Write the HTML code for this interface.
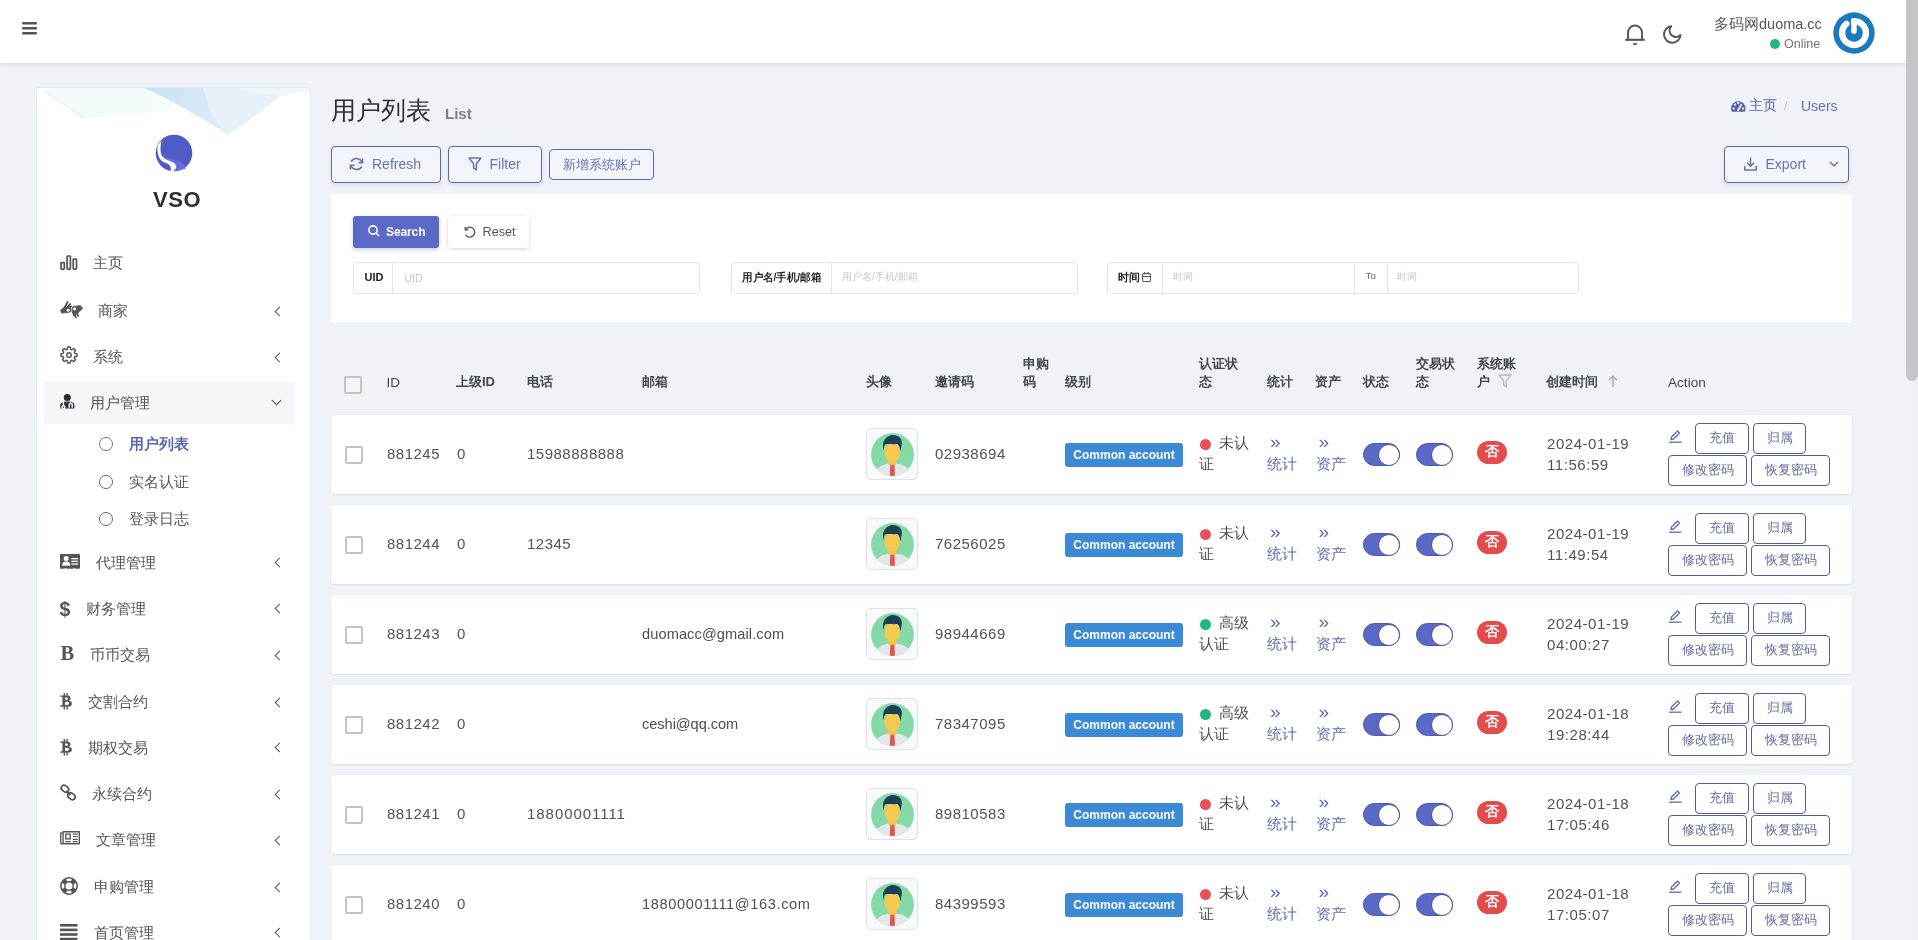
<!DOCTYPE html>
<html><head><meta charset="utf-8"><title>用户列表</title>
<style>
*{box-sizing:border-box;margin:0;padding:0}
html,body{width:1918px;height:940px;overflow:hidden}
body{background:#eff2f7;font-family:"Liberation Sans",sans-serif;color:#414750;position:relative}
.a{position:absolute}
.t{position:absolute;white-space:nowrap;line-height:1}
svg{position:absolute;overflow:visible}
#root{position:absolute;left:0;top:0;width:1918px;height:940px;will-change:transform}
#nav{left:0;top:0;width:1906px;height:63px;background:#fff;box-shadow:0 1px 5px rgba(40,50,70,.13);z-index:5}
#sb{left:1906px;top:0;width:12px;height:940px;background:#f1f1f1;z-index:9}
#sbt{left:1906px;top:0;width:12px;height:381px;background:#c6c6c6;border-radius:0 0 6px 6px;z-index:10}
#side{left:37px;top:88px;width:273px;height:870px;background:#fff;overflow:hidden;box-shadow:0 0 2px rgba(0,0,0,.1)}
.mi{color:#555;font-size:14.6px}
.chev{position:absolute;width:7px;height:7px;border-left:1.6px solid #555;border-bottom:1.6px solid #555;transform:rotate(45deg)}
.card{position:absolute;background:#fff;border-radius:4px}
.obtn{position:absolute;border:1px solid #5d68a9;border-radius:4px;background:#f3f5fa;color:#6674b6;box-shadow:0 2px 4px rgba(60,70,110,.12)}
.ig{position:absolute;height:32px;border:1px solid #e2e4e8;border-radius:4px;background:#fff}
.ig .lab{position:absolute;top:0;height:30px;border-right:1px solid #e2e4e8;font-weight:bold;color:#222;font-size:11px}
.ph{color:#c6c6c6;font-size:10.5px}
.hd{font-weight:bold;color:#414750;font-size:13px}
.row{position:absolute;left:331px;width:1521px;height:78.5px;background:#fff;border-radius:3px;box-shadow:0 1px 2px rgba(30,40,60,.09),0 0 1px rgba(30,40,60,.12)}
.cb{position:absolute;width:18px;height:18px;border:2px solid #c4c4c4;border-radius:2px;background:#fff}
.td{font-size:15px;color:#4a4f56}
.num{letter-spacing:.5px;font-size:15px;color:#505358}
.badge{position:absolute;width:118px;height:24px;background:#3a8ad6;border-radius:3px;color:#fff;font-weight:bold;font-size:12px;text-align:center;line-height:24px}
.dot{position:absolute;width:11px;height:11px;border-radius:50%}
.lk{color:#5e6cb0}
.tg{position:absolute;width:37px;height:23px;border-radius:12px;background:#5a69c6;border:1px solid #4b59a8}
.tg i{position:absolute;right:-0.5px;top:-0.5px;width:22px;height:22px;border-radius:50%;background:#fff;border:1.3px solid #4a569e}
.no{position:absolute;width:30px;height:23px;border-radius:12px;background:#e44c4c;color:#fff;font-size:13.5px;text-align:center;line-height:22px;font-weight:bold}
.abtn{position:absolute;height:31px;border:1px solid #535d9c;border-radius:4px;background:#fff;color:#646c9c;font-size:13px;text-align:center;line-height:27.5px}
.av{position:absolute;width:52px;height:52px;border:1px solid #dfe3e8;border-radius:5px;background:#f8f9fb}
</style></head><body>
<div id="root"><div id="nav" class="a">
<svg style="left:22px;top:21px" width="16" height="15"><rect x="0" y="1" width="15" height="2.6" rx="1" fill="#555"/><rect x="0" y="6" width="15" height="2.6" rx="1" fill="#555"/><rect x="0" y="11" width="15" height="2.6" rx="1" fill="#555"/></svg>
<svg style="left:1624px;top:23px" width="22" height="23" viewBox="0 0 22 23"><path d="M4 16.3 V9.5 a7 7 0 0 1 14 0 V16.3" fill="none" stroke="#555" stroke-width="1.9"/><path d="M1.3 16.8 H20.7" stroke="#555" stroke-width="2.1"/><path d="M9.2 20.3 Q11 22.4 12.8 20.3" fill="none" stroke="#555" stroke-width="1.7"/></svg>
<svg style="left:1662px;top:25px" width="21" height="20" viewBox="0 0 21 20"><path d="M9.3 1.2 A8.3 8.3 0 1 0 18.6 10 A6.2 6.2 0 0 1 9.3 1.2 Z" fill="none" stroke="#555" stroke-width="1.9" stroke-linejoin="round"/></svg>
<div class="t " style="left:1714px;top:17px;font-size:14.5px;color:#555">多码网duoma.cc</div>
<div class="dot" style="left:1770px;top:38.5px;width:10px;height:10px;background:#21b978"></div>
<div class="t " style="left:1784px;top:37.5px;font-size:12.5px;color:#777">Online</div>
<svg style="left:1833px;top:12px" width="42" height="42" viewBox="0 0 42 42"><circle cx="21" cy="21" r="20.7" fill="#1b79be"/><path d="M13.35 11.88 A11.9 11.9 0 1 0 21 9.1" fill="none" stroke="#fff" stroke-width="6.4" stroke-linecap="round"/><path d="M21 8.8 V19.2" stroke="#fff" stroke-width="5.4" stroke-linecap="round"/></svg>
</div>
<div id="side" class="a">
<svg style="left:0;top:0" width="273" height="60" viewBox="0 0 273 60">
<defs><filter id="bl" x="-5%" y="-20%" width="110%" height="140%"><feGaussianBlur stdDeviation="0.6"/></filter>
<linearGradient id="vg" x1="0" y1="0" x2="1" y2="0.3"><stop offset="0" stop-color="#c6e1f5"/><stop offset="1" stop-color="#dcecf8"/></linearGradient></defs>
<g filter="url(#bl)">
<path d="M0 0 H107 L95 5 L60 4Z" fill="#eef3f7"/>
<path d="M4 0 L48 30 L90 27 L140 21 L107 0Z" fill="#f3fbfc"/>
<path d="M8 3 L46 29.5" stroke="#ebf1f2" stroke-width="1.6"/>
<path d="M107 0 C128 9 148 20.5 162 29 C174 36 183 41 190.7 46.5 L175 27 L166.5 0Z" fill="url(#vg)"/>
<path d="M166.5 0 L175 27 L190.7 46.5 C206 38 226 22 243 8 L252 0Z" fill="#e6f1fa"/>
<path d="M200 0 H273 V3 L243 8 L215 3Z" fill="#eef5fb"/>
</g>
</svg>
<svg style="left:117.6px;top:46.4px" width="38" height="38" viewBox="0 0 38 38">
<circle cx="19" cy="19" r="18.3" fill="#4f5cc6"/>
<path d="M5.5 20 C9 25 17 24 24 27 C30 29.5 31 33 30.5 35 L21 37 C22 33 20 30 15 28.5 C10 27 7 24 5.5 20Z" fill="#6a6eea" opacity="0.85"/>
<path d="M6.6 6.8 C2.8 9.8 2.1 13 2.4 16 C2.7 22 5.2 26.3 8 27.8 C11 29.4 13.8 29.8 15 31.8 C16 33.4 16.2 35.2 15.5 37 L18 37.4 C20.7 36 22 33 20.8 31 C19.3 28.3 15.3 27.2 12.3 26 C8.3 24.5 5.9 21 5.6 17 C5.4 13 5.6 10 6.6 6.8Z" fill="#fff"/>
</svg>
<div class="t " style="left:116px;top:101px;font-size:22px;font-weight:bold;color:#2b2f36;letter-spacing:.6px">VSO</div>
<div class="a" style="left:7px;top:294px;width:250px;height:42px;background:#f5f6f9"></div>
<svg style="left:23px;top:167px" width="18" height="15" viewBox="0 0 18 15"><rect x="1" y="7.6" width="3.3" height="6.6" rx="0.6" fill="none" stroke="#555" stroke-width="1.7"/><rect x="7.1" y="1" width="3.3" height="13.2" rx="0.6" fill="none" stroke="#555" stroke-width="1.7"/><rect x="13.2" y="4.2" width="3.3" height="10" rx="0.6" fill="none" stroke="#555" stroke-width="1.7"/></svg>
<div class="t mi" style="left:56px;top:168.2px;">主页</div>
<svg style="left:22.5px;top:212.5px" width="24" height="18" viewBox="0 0 24 18"><g fill="#555" stroke="#555" stroke-linecap="round" stroke-linejoin="round"><path d="M0.6 9.6 L1.9 12.3 L4.2 11.8 L8.8 11.6 L10.8 10.1 L10.9 7.4 L9.2 6.4 L4.3 6.2 L2.8 7.2Z" stroke-width="0.8"/><path d="M4.6 6.8 L7.6 1 M7 6.8 L10 3 M8.8 7 L11 5.3" fill="none" stroke-width="1.9"/><path d="M12.3 7.2 L12.8 5.8 L20.3 4.5 L22.7 7.4 L19.3 10.5 L17.6 12.2 L12.3 11.2Z" stroke-width="0.8"/><path d="M12.8 10.8 L14 14.3 M14.8 11.5 L15.7 16.4 M17 11.8 L18 14.8" fill="none" stroke-width="1.9"/></g><circle cx="8.1" cy="9.2" r="1.45" fill="#fff"/><circle cx="14.6" cy="8" r="1.45" fill="#fff"/></svg>
<div class="t mi" style="left:61px;top:216.2px;">商家</div>
<div class="chev" style="left:239px;top:219.5px"></div>
<svg style="left:23px;top:258px" width="18" height="18" viewBox="0 0 18 18"><path d="M7.35 3.23 L7.73 1.00 L10.27 1.00 L10.65 3.23 L11.91 3.75 L13.76 2.45 L15.55 4.24 L14.25 6.09 L14.77 7.35 L17.00 7.73 L17.00 10.27 L14.77 10.65 L14.25 11.91 L15.55 13.76 L13.76 15.55 L11.91 14.25 L10.65 14.77 L10.27 17.00 L7.73 17.00 L7.35 14.77 L6.09 14.25 L4.24 15.55 L2.45 13.76 L3.75 11.91 L3.23 10.65 L1.00 10.27 L1.00 7.73 L3.23 7.35 L3.75 6.09 L2.45 4.24 L4.24 2.45 L6.09 3.75Z" fill="none" stroke="#555" stroke-width="1.45" stroke-linejoin="round"/><circle cx="9" cy="9" r="2.25" fill="none" stroke="#555" stroke-width="1.4"/></svg>
<div class="t mi" style="left:56px;top:262.2px;">系统</div>
<div class="chev" style="left:239px;top:265.5px"></div>
<svg style="left:23px;top:306px" width="15" height="15" viewBox="0 0 15 15"><circle cx="7.3" cy="3.6" r="3.5" fill="#2a2a2a"/><path d="M0.3 14.6 V11.3 C0.3 8.8 2.5 7.6 7.3 7.6 C12.1 7.6 14.3 8.8 14.3 11.3 V14.6Z" fill="#333"/><path d="M3.4 8 V11.8 M3.4 11.8 a1.4 1.4 0 1 0 0.1 0 M9.2 13.8 V10.8 a1.5 1.5 0 0 1 3 0 V13.8" fill="none" stroke="#fff" stroke-width="1.4"/></svg>
<div class="t mi" style="left:52.5px;top:308.2px;">用户管理</div>
<div class="chev" style="left:235.5px;top:309px;transform:rotate(-45deg)"></div>
<svg style="left:23px;top:466px" width="21" height="15" viewBox="0 0 21 15"><rect x="0" y="0" width="20" height="14.8" rx="0.8" fill="#555"/><circle cx="6.2" cy="4.6" r="2.5" fill="#fff"/><path d="M2.2 11.8 C2.2 8.4 3.6 7.4 6.2 7.4 C8.8 7.4 10.2 8.4 10.2 11.8Z" fill="#fff"/><rect x="11.3" y="4" width="6.8" height="1.3" fill="#fff"/><rect x="11.3" y="6.7" width="6.8" height="1.3" fill="#fff"/><rect x="11.3" y="9.4" width="6.8" height="1.3" fill="#fff"/><circle cx="5.6" cy="15" r="0.9" fill="#fff"/><circle cx="14.4" cy="15" r="0.9" fill="#fff"/></svg>
<div class="t mi" style="left:58.5px;top:467.7px;">代理管理</div>
<div class="chev" style="left:239px;top:471.0px"></div>
<div class="t " style="left:22.5px;top:511.5px;font-size:19.5px;color:#555;font-weight:bold;font-family:'Liberation Sans';">$</div>
<div class="t mi" style="left:48.5px;top:513.7px;">财务管理</div>
<div class="chev" style="left:239px;top:517.0px"></div>
<div class="t " style="left:23.5px;top:555.4px;font-size:20.5px;color:#555;font-weight:bold;font-family:'Liberation Serif';">B</div>
<div class="t mi" style="left:53px;top:560.2px;">币币交易</div>
<div class="chev" style="left:239px;top:563.5px"></div>
<svg style="left:23px;top:605px" width="12" height="17" viewBox="0 0 12 17"><path fill-rule="evenodd" fill="#555" d="M0.2 2.5 H7 C9.5 2.5 10.5 3.8 10.5 5.2 C10.5 6.5 9.6 7.3 8.6 7.6 C10.5 8 11.9 9 11.9 10.8 C11.9 12.6 10.2 13.8 7.7 13.8 H0 L0.3 12.6 L2.4 12.2 V4 L0.2 3.6Z M5 4.4 V6.8 H6.6 C7.5 6.8 8 6.3 8 5.6 C8 4.9 7.5 4.4 6.6 4.4Z M5 8.8 V11.9 H7 C8.3 11.9 9.1 11.3 9.1 10.35 C9.1 9.4 8.3 8.8 7 8.8Z"/><rect x="3.6" y="0" width="1.4" height="3" fill="#555"/><rect x="6.4" y="0" width="1.4" height="3" fill="#555"/><rect x="3.6" y="13.5" width="1.4" height="3" fill="#555"/><rect x="6.4" y="13.5" width="1.4" height="3" fill="#555"/></svg>
<div class="t mi" style="left:51px;top:607.2px;">交割合约</div>
<div class="chev" style="left:239px;top:610.5px"></div>
<svg style="left:23px;top:651.2px" width="12" height="17" viewBox="0 0 12 17"><path fill-rule="evenodd" fill="#555" d="M0.2 2.5 H7 C9.5 2.5 10.5 3.8 10.5 5.2 C10.5 6.5 9.6 7.3 8.6 7.6 C10.5 8 11.9 9 11.9 10.8 C11.9 12.6 10.2 13.8 7.7 13.8 H0 L0.3 12.6 L2.4 12.2 V4 L0.2 3.6Z M5 4.4 V6.8 H6.6 C7.5 6.8 8 6.3 8 5.6 C8 4.9 7.5 4.4 6.6 4.4Z M5 8.8 V11.9 H7 C8.3 11.9 9.1 11.3 9.1 10.35 C9.1 9.4 8.3 8.8 7 8.8Z"/><rect x="3.6" y="0" width="1.4" height="3" fill="#555"/><rect x="6.4" y="0" width="1.4" height="3" fill="#555"/><rect x="3.6" y="13.5" width="1.4" height="3" fill="#555"/><rect x="6.4" y="13.5" width="1.4" height="3" fill="#555"/></svg>
<div class="t mi" style="left:51px;top:652.7px;">期权交易</div>
<div class="chev" style="left:239px;top:656.0px"></div>
<svg style="left:23px;top:697px" width="17" height="16" viewBox="0 0 17 16"><rect x="1" y="1" width="8" height="5.5" rx="2.75" transform="rotate(40 5 3.75)" fill="none" stroke="#555" stroke-width="1.7"/><rect x="7.5" y="8.5" width="8" height="5.5" rx="2.75" transform="rotate(40 11.5 11.25)" fill="none" stroke="#555" stroke-width="1.7"/><path d="M6 6 L10.5 10" stroke="#555" stroke-width="1.7"/></svg>
<div class="t mi" style="left:55px;top:699.2px;">永续合约</div>
<div class="chev" style="left:239px;top:702.5px"></div>
<svg style="left:23px;top:743px" width="21" height="14" viewBox="0 0 21 14"><path d="M3.1 0.75 H19.3 V12.75 H1.4 A0.8 0.8 0 0 1 0.75 12.1 V1.9 H3.1Z M3.1 1.9 V12.7" fill="none" stroke="#555" stroke-width="1.35" stroke-linejoin="round"/><rect x="5.85" y="3.05" width="4.3" height="4.85" fill="none" stroke="#555" stroke-width="1.35"/><path d="M12.85 3.2 H17.7 M12.85 5.5 H17.7 M12.85 8.3 H17.7 M5.2 10.6 H10.8 M12.85 10.6 H17.7" stroke="#555" stroke-width="1.2"/></svg>
<div class="t mi" style="left:58.5px;top:745.2px;">文章管理</div>
<div class="chev" style="left:239px;top:748.5px"></div>
<svg style="left:23px;top:789px" width="18" height="18" viewBox="0 0 18 18"><circle cx="9" cy="9" r="8.2" fill="none" stroke="#555" stroke-width="1.5"/><circle cx="9" cy="9" r="4.2" fill="none" stroke="#555" stroke-width="1.4"/><path d="M5.862 1.424 A8.2 8.2 0 0 1 12.138 1.424 L10.607 5.12 A4.2 4.2 0 0 0 7.393 5.12Z" fill="#555" transform="rotate(45 9 9)"/><path d="M5.862 1.424 A8.2 8.2 0 0 1 12.138 1.424 L10.607 5.12 A4.2 4.2 0 0 0 7.393 5.12Z" fill="#555" transform="rotate(135 9 9)"/><path d="M5.862 1.424 A8.2 8.2 0 0 1 12.138 1.424 L10.607 5.12 A4.2 4.2 0 0 0 7.393 5.12Z" fill="#555" transform="rotate(225 9 9)"/><path d="M5.862 1.424 A8.2 8.2 0 0 1 12.138 1.424 L10.607 5.12 A4.2 4.2 0 0 0 7.393 5.12Z" fill="#555" transform="rotate(315 9 9)"/></svg>
<div class="t mi" style="left:56.5px;top:792.2px;">申购管理</div>
<div class="chev" style="left:239px;top:795.5px"></div>
<svg style="left:23px;top:836px" width="18" height="16" viewBox="0 0 18 16"><rect x="0" y="0" width="17.5" height="2.6" fill="#555"/><rect x="0" y="4.6" width="17.5" height="2.6" fill="#555"/><rect x="0" y="9.2" width="17.5" height="2.6" fill="#555"/><rect x="0" y="13.8" width="17.5" height="2.6" fill="#555"/></svg>
<div class="t mi" style="left:56.5px;top:837.7px;">首页管理</div>
<div class="chev" style="left:239px;top:841.0px"></div>
<div class="a" style="left:62px;top:349px;width:14px;height:14px;border-radius:50%;border:1.6px solid #6372c0"></div>
<div class="t mi" style="left:92px;top:349.2px;color:#5866b4;font-weight:bold">用户列表</div>
<div class="a" style="left:62px;top:387px;width:14px;height:14px;border-radius:50%;border:1.6px solid #666"></div>
<div class="t mi" style="left:92px;top:387.2px;">实名认证</div>
<div class="a" style="left:62px;top:424px;width:14px;height:14px;border-radius:50%;border:1.6px solid #666"></div>
<div class="t mi" style="left:92px;top:424.2px;">登录日志</div>
</div>
<div class="t " style="left:331px;top:98px;font-size:25px;color:#2a2e35">用户列表</div>
<div class="t " style="left:445px;top:105.7px;font-size:15px;color:#7a8088;font-weight:bold">List</div>
<svg style="left:1731px;top:101px" width="15" height="11" viewBox="0 0 15 11"><defs><clipPath id="bc"><rect x="0" y="0" width="15" height="10.8"/></clipPath></defs><circle cx="7.3" cy="7.4" r="7.2" fill="#5562b4" clip-path="url(#bc)"/><circle cx="2.6" cy="7.6" r="1.1" fill="#fff"/><circle cx="4" cy="3.6" r="1.1" fill="#fff"/><circle cx="7.3" cy="2.2" r="1.1" fill="#fff"/><circle cx="12" cy="7.6" r="1.1" fill="#fff"/><path d="M7 9.5 L10.3 3.6" stroke="#fff" stroke-width="1.6" stroke-linecap="round"/></svg>
<div class="t " style="left:1749px;top:98.5px;font-size:13.8px;color:#5a66a8">主页</div>
<div class="t " style="left:1784px;top:99px;font-size:13px;color:#c8c8c8">/</div>
<div class="t " style="left:1801px;top:98.5px;font-size:14px;color:#6773b0">Users</div>
<div class="obtn" style="left:331px;top:146px;width:110px;height:37px"></div>
<svg style="left:349px;top:157px" width="15" height="14" viewBox="0 0 15 14"><path d="M13 5.5 A6 6 0 0 0 2.2 4.5 M2 8.5 A6 6 0 0 0 12.8 9.5" fill="none" stroke="#6674b6" stroke-width="1.6"/><path d="M13.6 1.5 V5.8 H9.4" fill="none" stroke="#6674b6" stroke-width="1.6"/><path d="M1.4 12.5 V8.2 H5.6" fill="none" stroke="#6674b6" stroke-width="1.6"/></svg>
<div class="t " style="left:372px;top:157px;font-size:14px;color:#6674b6">Refresh</div>
<div class="obtn" style="left:448px;top:146px;width:94px;height:37px"></div>
<svg style="left:468px;top:157px" width="14" height="14" viewBox="0 0 14 14"><path d="M1 1 H13 L8.4 6.8 V12.8 L5.6 11 V6.8Z" fill="none" stroke="#6674b6" stroke-width="1.5" stroke-linejoin="round"/></svg>
<div class="t " style="left:489.5px;top:157px;font-size:14px;color:#6674b6">Filter</div>
<div class="obtn" style="left:549px;top:149px;width:105px;height:31px;box-shadow:none"></div>
<div class="t " style="left:562.5px;top:158.5px;font-size:12.8px;color:#6674b6">新增系统账户</div>
<div class="obtn" style="left:1724px;top:146px;width:125px;height:37px"></div>
<svg style="left:1744px;top:157px" width="13" height="14" viewBox="0 0 13 14"><path d="M6.5 0.5 V9 M3 5.8 L6.5 9.2 L10 5.8" fill="none" stroke="#6674b6" stroke-width="1.6"/><path d="M0.8 9 V13 H12.2 V9" fill="none" stroke="#6674b6" stroke-width="1.6"/></svg>
<div class="t " style="left:1765.5px;top:157px;font-size:14px;color:#6674b6">Export</div>
<svg style="left:1829px;top:161px" width="10" height="6" viewBox="0 0 10 6"><path d="M1 1 L5 5 L9 1" fill="none" stroke="#6674b6" stroke-width="1.5"/></svg>
<div class="card" style="left:331px;top:194px;width:1521px;height:129px;border-radius:2px;box-shadow:0 1px 2px rgba(0,0,0,.02)"></div>
<div class="a" style="left:353px;top:216px;width:86px;height:32px;background:#5a6ac6;border-radius:3px;box-shadow:0 2px 4px rgba(60,70,150,.25)"></div>
<svg style="left:368px;top:225px" width="12" height="12" viewBox="0 0 12 12"><circle cx="5" cy="5" r="4.1" fill="none" stroke="#fff" stroke-width="1.6"/><path d="M8 8 L11 11" stroke="#fff" stroke-width="1.7"/></svg>
<div class="t " style="left:386px;top:226px;font-size:12px;color:#fff;font-weight:bold;letter-spacing:-.1px">Search</div>
<div class="a" style="left:448px;top:216px;width:81px;height:32px;background:#fff;border-radius:3px;box-shadow:0 1px 4px rgba(0,0,0,.16)"></div>
<svg style="left:462.5px;top:225.5px" width="14" height="14" viewBox="0 0 14 14"><path d="M2.6 3.4 A5 5 0 1 1 2.4 8.6" fill="none" stroke="#555" stroke-width="1.3"/><path d="M1.9 0.9 L2.4 4 L5.3 3.5" fill="none" stroke="#555" stroke-width="1.3"/></svg>
<div class="t " style="left:482.5px;top:226px;font-size:12.7px;color:#555">Reset</div>
<div class="ig" style="left:353px;top:262px;width:347px"><div class="lab" style="left:0;width:39px"></div></div>
<div class="t " style="left:364.5px;top:272px;font-size:11px;font-weight:bold;color:#222">UID</div>
<div class="t ph" style="left:404.5px;top:272.5px;">UID</div>
<div class="ig" style="left:730.5px;top:262px;width:347px"><div class="lab" style="left:0;width:100px"></div></div>
<div class="t " style="left:741.5px;top:272px;font-size:10.5px;transform:scaleX(.955);transform-origin:0 0;font-weight:bold;color:#222">用户名/手机/邮箱</div>
<div class="t ph" style="left:842px;top:272px;font-size:10.2px">用户名/手机/邮箱</div>
<div class="ig" style="left:1106.5px;top:262px;width:472.5px"><div class="lab" style="left:0;width:55px"></div><div class="a" style="left:246px;top:0;width:34px;height:30px;border-left:1px solid #e2e4e8;border-right:1px solid #e2e4e8"></div></div>
<div class="t " style="left:1118px;top:272px;font-size:10.5px;font-weight:bold;color:#222">时间</div>
<svg style="left:1142px;top:272px" width="9" height="10" viewBox="0 0 9 10"><rect x="0.6" y="1.5" width="7.8" height="8" rx="1" fill="none" stroke="#555" stroke-width="1.1"/><path d="M0.6 4.5 H8.4 M2.8 0 V2.5 M6.2 0 V2.5" stroke="#555" stroke-width="1.1"/></svg>
<div class="t ph" style="left:1172.5px;top:272px;font-size:10px">时间</div>
<div class="t " style="left:1365.5px;top:270.5px;font-size:9.6px;color:#6a6a6a;letter-spacing:.3px">To</div>
<div class="t ph" style="left:1397px;top:272px;font-size:10px">时间</div>
<div class="cb" style="left:344px;top:376px;border-color:#c4c4c4;background:#f3f5f8"></div>
<div class="t hd" style="left:386.5px;top:376px;font-weight:normal;font-size:13.5px">ID</div>
<div class="t hd" style="left:456px;top:375px;">上级ID</div>
<div class="t hd" style="left:527px;top:375px;">电话</div>
<div class="t hd" style="left:641.5px;top:375px;">邮箱</div>
<div class="t hd" style="left:866px;top:375px;">头像</div>
<div class="t hd" style="left:935px;top:375px;">邀请码</div>
<div class="t hd" style="left:1023px;top:356.5px;">申购</div>
<div class="t hd" style="left:1023px;top:375px;">码</div>
<div class="t hd" style="left:1065px;top:375px;">级别</div>
<div class="t hd" style="left:1198.5px;top:356.5px;">认证状</div>
<div class="t hd" style="left:1198.5px;top:375px;">态</div>
<div class="t hd" style="left:1267px;top:375px;">统计</div>
<div class="t hd" style="left:1315px;top:375px;">资产</div>
<div class="t hd" style="left:1363px;top:375px;">状态</div>
<div class="t hd" style="left:1416px;top:356.5px;">交易状</div>
<div class="t hd" style="left:1416px;top:375px;">态</div>
<div class="t hd" style="left:1477px;top:356.5px;">系统账</div>
<div class="t hd" style="left:1477px;top:375px;">户</div>
<div class="t hd" style="left:1545.5px;top:375px;">创建时间</div>
<div class="t hd" style="left:1668px;top:376px;font-weight:normal;font-size:13.6px">Action</div>
<svg style="left:1498px;top:374px" width="14" height="14" viewBox="0 0 14 14"><path d="M1 1 H13 L8.3 6.8 V13 L5.7 11.2 V6.8Z" fill="none" stroke="#b5b9c0" stroke-width="1.3" stroke-linejoin="round"/></svg>
<svg style="left:1608px;top:375px" width="10" height="12" viewBox="0 0 10 12"><path d="M5 12 V1.5 M1 5.3 L5 1.3 L9 5.3" fill="none" stroke="#a8acb3" stroke-width="1.4"/></svg>
<div class="row" style="top:415px"></div>
<div class="cb" style="left:345px;top:446px"></div>
<div class="t td num" style="left:387px;top:445.5px;">881245</div>
<div class="t td num" style="left:457px;top:445.5px;">0</div>
<div class="t td num" style="left:527px;top:445.5px;letter-spacing:0.5px">15988888888</div>
<div class="av" style="left:866px;top:428px"></div>
<svg style="left:871px;top:432.5px" width="44" height="44" viewBox="0 0 44 44">
<defs><clipPath id="c0"><circle cx="21.5" cy="21.5" r="21.4"/></clipPath></defs>
<circle cx="21.5" cy="21.5" r="21.4" fill="#84d9a6"/>
<g clip-path="url(#c0)">
<path d="M3 40 C7 34 12 31 17 30.8 H26 C31 31 36 33.5 40 38 L44 44 H0Z" fill="#e3e6ea"/>
<path d="M16 30.8 L21.3 33 L26.5 30.8Z" fill="#fff"/>
<path d="M19.3 32 H23.5 L24 42.5 L21.4 44 L18.8 42.5Z" fill="#e0574f"/>
</g>
<rect x="17" y="24" width="8.5" height="8" rx="1.5" fill="#f6c24c"/>
<ellipse cx="21.2" cy="19" rx="7.8" ry="9.6" fill="#f8c951"/>
<path d="M12.6 17.5 C10.8 11 12.5 4 20 2.2 C27 1.5 31.5 5.5 30.8 10.5 C30.5 13 30 16 29.5 18.2 C28.8 14 28 12 26.5 11 C22 11.5 17 10.5 14 11.5 C13 13 12.8 15 12.6 17.5Z" fill="#1f3f57"/>
</svg>
<div class="t td num" style="left:935px;top:445.5px;">02938694</div>
<div class="badge" style="left:1065px;top:443px">Common account</div>
<div class="dot" style="left:1200px;top:438.5px;background:#e8505b"></div>
<div class="t td" style="left:1219px;top:435px;">未认</div>
<div class="t td" style="left:1199px;top:456.3px;">证</div>
<div class="t td lk" style="left:1270px;top:432px;font-size:19px">»</div>
<div class="t td lk" style="left:1267px;top:456.3px;">统计</div>
<div class="t td lk" style="left:1318.5px;top:432px;font-size:19px">»</div>
<div class="t td lk" style="left:1316px;top:456.3px;">资产</div>
<div class="tg" style="left:1363px;top:443px"><i></i></div>
<div class="tg" style="left:1416px;top:443px"><i></i></div>
<div class="no" style="left:1477px;top:441px">否</div>
<div class="t td num" style="left:1547px;top:435.5px;letter-spacing:.55px">2024-01-19</div>
<div class="t td num" style="left:1547px;top:456.5px;letter-spacing:.55px">11:56:59</div>
<svg style="left:1668px;top:430px" width="14" height="13" viewBox="0 0 14 13"><path d="M3 9.5 L3.5 7 L9.5 1 L11.5 3 L5.5 9 Z" fill="none" stroke="#5e6cb0" stroke-width="1.3" stroke-linejoin="round"/><path d="M1 12.2 H13.5" stroke="#5e6cb0" stroke-width="1.3"/></svg>
<div class="abtn" style="left:1695px;top:423px;width:54px">充值</div>
<div class="abtn" style="left:1753px;top:423px;width:53px">归属</div>
<div class="abtn" style="left:1668px;top:455px;width:79px;height:31px">修改密码</div>
<div class="abtn" style="left:1751px;top:455px;width:79px;height:31px">恢复密码</div>
<div class="row" style="top:505px"></div>
<div class="cb" style="left:345px;top:536px"></div>
<div class="t td num" style="left:387px;top:535.5px;">881244</div>
<div class="t td num" style="left:457px;top:535.5px;">0</div>
<div class="t td num" style="left:527px;top:535.5px;letter-spacing:0.5px">12345</div>
<div class="av" style="left:866px;top:518px"></div>
<svg style="left:871px;top:522.5px" width="44" height="44" viewBox="0 0 44 44">
<defs><clipPath id="c1"><circle cx="21.5" cy="21.5" r="21.4"/></clipPath></defs>
<circle cx="21.5" cy="21.5" r="21.4" fill="#84d9a6"/>
<g clip-path="url(#c1)">
<path d="M3 40 C7 34 12 31 17 30.8 H26 C31 31 36 33.5 40 38 L44 44 H0Z" fill="#e3e6ea"/>
<path d="M16 30.8 L21.3 33 L26.5 30.8Z" fill="#fff"/>
<path d="M19.3 32 H23.5 L24 42.5 L21.4 44 L18.8 42.5Z" fill="#e0574f"/>
</g>
<rect x="17" y="24" width="8.5" height="8" rx="1.5" fill="#f6c24c"/>
<ellipse cx="21.2" cy="19" rx="7.8" ry="9.6" fill="#f8c951"/>
<path d="M12.6 17.5 C10.8 11 12.5 4 20 2.2 C27 1.5 31.5 5.5 30.8 10.5 C30.5 13 30 16 29.5 18.2 C28.8 14 28 12 26.5 11 C22 11.5 17 10.5 14 11.5 C13 13 12.8 15 12.6 17.5Z" fill="#1f3f57"/>
</svg>
<div class="t td num" style="left:935px;top:535.5px;">76256025</div>
<div class="badge" style="left:1065px;top:533px">Common account</div>
<div class="dot" style="left:1200px;top:528.5px;background:#e8505b"></div>
<div class="t td" style="left:1219px;top:525px;">未认</div>
<div class="t td" style="left:1199px;top:546.3px;">证</div>
<div class="t td lk" style="left:1270px;top:522px;font-size:19px">»</div>
<div class="t td lk" style="left:1267px;top:546.3px;">统计</div>
<div class="t td lk" style="left:1318.5px;top:522px;font-size:19px">»</div>
<div class="t td lk" style="left:1316px;top:546.3px;">资产</div>
<div class="tg" style="left:1363px;top:533px"><i></i></div>
<div class="tg" style="left:1416px;top:533px"><i></i></div>
<div class="no" style="left:1477px;top:531px">否</div>
<div class="t td num" style="left:1547px;top:525.5px;letter-spacing:.55px">2024-01-19</div>
<div class="t td num" style="left:1547px;top:546.5px;letter-spacing:.55px">11:49:54</div>
<svg style="left:1668px;top:520px" width="14" height="13" viewBox="0 0 14 13"><path d="M3 9.5 L3.5 7 L9.5 1 L11.5 3 L5.5 9 Z" fill="none" stroke="#5e6cb0" stroke-width="1.3" stroke-linejoin="round"/><path d="M1 12.2 H13.5" stroke="#5e6cb0" stroke-width="1.3"/></svg>
<div class="abtn" style="left:1695px;top:513px;width:54px">充值</div>
<div class="abtn" style="left:1753px;top:513px;width:53px">归属</div>
<div class="abtn" style="left:1668px;top:545px;width:79px;height:31px">修改密码</div>
<div class="abtn" style="left:1751px;top:545px;width:79px;height:31px">恢复密码</div>
<div class="row" style="top:595px"></div>
<div class="cb" style="left:345px;top:626px"></div>
<div class="t td num" style="left:387px;top:625.5px;">881243</div>
<div class="t td num" style="left:457px;top:625.5px;">0</div>
<div class="t td" style="left:642px;top:626.5px;letter-spacing:0.1px;font-size:14.6px">duomacc@gmail.com</div>
<div class="av" style="left:866px;top:608px"></div>
<svg style="left:871px;top:612.5px" width="44" height="44" viewBox="0 0 44 44">
<defs><clipPath id="c2"><circle cx="21.5" cy="21.5" r="21.4"/></clipPath></defs>
<circle cx="21.5" cy="21.5" r="21.4" fill="#84d9a6"/>
<g clip-path="url(#c2)">
<path d="M3 40 C7 34 12 31 17 30.8 H26 C31 31 36 33.5 40 38 L44 44 H0Z" fill="#e3e6ea"/>
<path d="M16 30.8 L21.3 33 L26.5 30.8Z" fill="#fff"/>
<path d="M19.3 32 H23.5 L24 42.5 L21.4 44 L18.8 42.5Z" fill="#e0574f"/>
</g>
<rect x="17" y="24" width="8.5" height="8" rx="1.5" fill="#f6c24c"/>
<ellipse cx="21.2" cy="19" rx="7.8" ry="9.6" fill="#f8c951"/>
<path d="M12.6 17.5 C10.8 11 12.5 4 20 2.2 C27 1.5 31.5 5.5 30.8 10.5 C30.5 13 30 16 29.5 18.2 C28.8 14 28 12 26.5 11 C22 11.5 17 10.5 14 11.5 C13 13 12.8 15 12.6 17.5Z" fill="#1f3f57"/>
</svg>
<div class="t td num" style="left:935px;top:625.5px;">98944669</div>
<div class="badge" style="left:1065px;top:623px">Common account</div>
<div class="dot" style="left:1200px;top:618.5px;background:#21b978"></div>
<div class="t td" style="left:1219px;top:615px;">高级</div>
<div class="t td" style="left:1199px;top:636.3px;">认证</div>
<div class="t td lk" style="left:1270px;top:612px;font-size:19px">»</div>
<div class="t td lk" style="left:1267px;top:636.3px;">统计</div>
<div class="t td lk" style="left:1318.5px;top:612px;font-size:19px">»</div>
<div class="t td lk" style="left:1316px;top:636.3px;">资产</div>
<div class="tg" style="left:1363px;top:623px"><i></i></div>
<div class="tg" style="left:1416px;top:623px"><i></i></div>
<div class="no" style="left:1477px;top:621px">否</div>
<div class="t td num" style="left:1547px;top:615.5px;letter-spacing:.55px">2024-01-19</div>
<div class="t td num" style="left:1547px;top:636.5px;letter-spacing:.55px">04:00:27</div>
<svg style="left:1668px;top:610px" width="14" height="13" viewBox="0 0 14 13"><path d="M3 9.5 L3.5 7 L9.5 1 L11.5 3 L5.5 9 Z" fill="none" stroke="#5e6cb0" stroke-width="1.3" stroke-linejoin="round"/><path d="M1 12.2 H13.5" stroke="#5e6cb0" stroke-width="1.3"/></svg>
<div class="abtn" style="left:1695px;top:603px;width:54px">充值</div>
<div class="abtn" style="left:1753px;top:603px;width:53px">归属</div>
<div class="abtn" style="left:1668px;top:635px;width:79px;height:31px">修改密码</div>
<div class="abtn" style="left:1751px;top:635px;width:79px;height:31px">恢复密码</div>
<div class="row" style="top:685px"></div>
<div class="cb" style="left:345px;top:716px"></div>
<div class="t td num" style="left:387px;top:715.5px;">881242</div>
<div class="t td num" style="left:457px;top:715.5px;">0</div>
<div class="t td" style="left:642px;top:716.5px;letter-spacing:-0.05px;font-size:14.6px">ceshi@qq.com</div>
<div class="av" style="left:866px;top:698px"></div>
<svg style="left:871px;top:702.5px" width="44" height="44" viewBox="0 0 44 44">
<defs><clipPath id="c3"><circle cx="21.5" cy="21.5" r="21.4"/></clipPath></defs>
<circle cx="21.5" cy="21.5" r="21.4" fill="#84d9a6"/>
<g clip-path="url(#c3)">
<path d="M3 40 C7 34 12 31 17 30.8 H26 C31 31 36 33.5 40 38 L44 44 H0Z" fill="#e3e6ea"/>
<path d="M16 30.8 L21.3 33 L26.5 30.8Z" fill="#fff"/>
<path d="M19.3 32 H23.5 L24 42.5 L21.4 44 L18.8 42.5Z" fill="#e0574f"/>
</g>
<rect x="17" y="24" width="8.5" height="8" rx="1.5" fill="#f6c24c"/>
<ellipse cx="21.2" cy="19" rx="7.8" ry="9.6" fill="#f8c951"/>
<path d="M12.6 17.5 C10.8 11 12.5 4 20 2.2 C27 1.5 31.5 5.5 30.8 10.5 C30.5 13 30 16 29.5 18.2 C28.8 14 28 12 26.5 11 C22 11.5 17 10.5 14 11.5 C13 13 12.8 15 12.6 17.5Z" fill="#1f3f57"/>
</svg>
<div class="t td num" style="left:935px;top:715.5px;">78347095</div>
<div class="badge" style="left:1065px;top:713px">Common account</div>
<div class="dot" style="left:1200px;top:708.5px;background:#21b978"></div>
<div class="t td" style="left:1219px;top:705px;">高级</div>
<div class="t td" style="left:1199px;top:726.3px;">认证</div>
<div class="t td lk" style="left:1270px;top:702px;font-size:19px">»</div>
<div class="t td lk" style="left:1267px;top:726.3px;">统计</div>
<div class="t td lk" style="left:1318.5px;top:702px;font-size:19px">»</div>
<div class="t td lk" style="left:1316px;top:726.3px;">资产</div>
<div class="tg" style="left:1363px;top:713px"><i></i></div>
<div class="tg" style="left:1416px;top:713px"><i></i></div>
<div class="no" style="left:1477px;top:711px">否</div>
<div class="t td num" style="left:1547px;top:705.5px;letter-spacing:.55px">2024-01-18</div>
<div class="t td num" style="left:1547px;top:726.5px;letter-spacing:.55px">19:28:44</div>
<svg style="left:1668px;top:700px" width="14" height="13" viewBox="0 0 14 13"><path d="M3 9.5 L3.5 7 L9.5 1 L11.5 3 L5.5 9 Z" fill="none" stroke="#5e6cb0" stroke-width="1.3" stroke-linejoin="round"/><path d="M1 12.2 H13.5" stroke="#5e6cb0" stroke-width="1.3"/></svg>
<div class="abtn" style="left:1695px;top:693px;width:54px">充值</div>
<div class="abtn" style="left:1753px;top:693px;width:53px">归属</div>
<div class="abtn" style="left:1668px;top:725px;width:79px;height:31px">修改密码</div>
<div class="abtn" style="left:1751px;top:725px;width:79px;height:31px">恢复密码</div>
<div class="row" style="top:775px"></div>
<div class="cb" style="left:345px;top:806px"></div>
<div class="t td num" style="left:387px;top:805.5px;">881241</div>
<div class="t td num" style="left:457px;top:805.5px;">0</div>
<div class="t td num" style="left:527px;top:805.5px;letter-spacing:0.95px">18800001111</div>
<div class="av" style="left:866px;top:788px"></div>
<svg style="left:871px;top:792.5px" width="44" height="44" viewBox="0 0 44 44">
<defs><clipPath id="c4"><circle cx="21.5" cy="21.5" r="21.4"/></clipPath></defs>
<circle cx="21.5" cy="21.5" r="21.4" fill="#84d9a6"/>
<g clip-path="url(#c4)">
<path d="M3 40 C7 34 12 31 17 30.8 H26 C31 31 36 33.5 40 38 L44 44 H0Z" fill="#e3e6ea"/>
<path d="M16 30.8 L21.3 33 L26.5 30.8Z" fill="#fff"/>
<path d="M19.3 32 H23.5 L24 42.5 L21.4 44 L18.8 42.5Z" fill="#e0574f"/>
</g>
<rect x="17" y="24" width="8.5" height="8" rx="1.5" fill="#f6c24c"/>
<ellipse cx="21.2" cy="19" rx="7.8" ry="9.6" fill="#f8c951"/>
<path d="M12.6 17.5 C10.8 11 12.5 4 20 2.2 C27 1.5 31.5 5.5 30.8 10.5 C30.5 13 30 16 29.5 18.2 C28.8 14 28 12 26.5 11 C22 11.5 17 10.5 14 11.5 C13 13 12.8 15 12.6 17.5Z" fill="#1f3f57"/>
</svg>
<div class="t td num" style="left:935px;top:805.5px;">89810583</div>
<div class="badge" style="left:1065px;top:803px">Common account</div>
<div class="dot" style="left:1200px;top:798.5px;background:#e8505b"></div>
<div class="t td" style="left:1219px;top:795px;">未认</div>
<div class="t td" style="left:1199px;top:816.3px;">证</div>
<div class="t td lk" style="left:1270px;top:792px;font-size:19px">»</div>
<div class="t td lk" style="left:1267px;top:816.3px;">统计</div>
<div class="t td lk" style="left:1318.5px;top:792px;font-size:19px">»</div>
<div class="t td lk" style="left:1316px;top:816.3px;">资产</div>
<div class="tg" style="left:1363px;top:803px"><i></i></div>
<div class="tg" style="left:1416px;top:803px"><i></i></div>
<div class="no" style="left:1477px;top:801px">否</div>
<div class="t td num" style="left:1547px;top:795.5px;letter-spacing:.55px">2024-01-18</div>
<div class="t td num" style="left:1547px;top:816.5px;letter-spacing:.55px">17:05:46</div>
<svg style="left:1668px;top:790px" width="14" height="13" viewBox="0 0 14 13"><path d="M3 9.5 L3.5 7 L9.5 1 L11.5 3 L5.5 9 Z" fill="none" stroke="#5e6cb0" stroke-width="1.3" stroke-linejoin="round"/><path d="M1 12.2 H13.5" stroke="#5e6cb0" stroke-width="1.3"/></svg>
<div class="abtn" style="left:1695px;top:783px;width:54px">充值</div>
<div class="abtn" style="left:1753px;top:783px;width:53px">归属</div>
<div class="abtn" style="left:1668px;top:815px;width:79px;height:31px">修改密码</div>
<div class="abtn" style="left:1751px;top:815px;width:79px;height:31px">恢复密码</div>
<div class="row" style="top:865px"></div>
<div class="cb" style="left:345px;top:896px"></div>
<div class="t td num" style="left:387px;top:895.5px;">881240</div>
<div class="t td num" style="left:457px;top:895.5px;">0</div>
<div class="t td" style="left:642px;top:896.5px;letter-spacing:0.62px;font-size:14.6px">18800001111@163.com</div>
<div class="av" style="left:866px;top:878px"></div>
<svg style="left:871px;top:882.5px" width="44" height="44" viewBox="0 0 44 44">
<defs><clipPath id="c5"><circle cx="21.5" cy="21.5" r="21.4"/></clipPath></defs>
<circle cx="21.5" cy="21.5" r="21.4" fill="#84d9a6"/>
<g clip-path="url(#c5)">
<path d="M3 40 C7 34 12 31 17 30.8 H26 C31 31 36 33.5 40 38 L44 44 H0Z" fill="#e3e6ea"/>
<path d="M16 30.8 L21.3 33 L26.5 30.8Z" fill="#fff"/>
<path d="M19.3 32 H23.5 L24 42.5 L21.4 44 L18.8 42.5Z" fill="#e0574f"/>
</g>
<rect x="17" y="24" width="8.5" height="8" rx="1.5" fill="#f6c24c"/>
<ellipse cx="21.2" cy="19" rx="7.8" ry="9.6" fill="#f8c951"/>
<path d="M12.6 17.5 C10.8 11 12.5 4 20 2.2 C27 1.5 31.5 5.5 30.8 10.5 C30.5 13 30 16 29.5 18.2 C28.8 14 28 12 26.5 11 C22 11.5 17 10.5 14 11.5 C13 13 12.8 15 12.6 17.5Z" fill="#1f3f57"/>
</svg>
<div class="t td num" style="left:935px;top:895.5px;">84399593</div>
<div class="badge" style="left:1065px;top:893px">Common account</div>
<div class="dot" style="left:1200px;top:888.5px;background:#e8505b"></div>
<div class="t td" style="left:1219px;top:885px;">未认</div>
<div class="t td" style="left:1199px;top:906.3px;">证</div>
<div class="t td lk" style="left:1270px;top:882px;font-size:19px">»</div>
<div class="t td lk" style="left:1267px;top:906.3px;">统计</div>
<div class="t td lk" style="left:1318.5px;top:882px;font-size:19px">»</div>
<div class="t td lk" style="left:1316px;top:906.3px;">资产</div>
<div class="tg" style="left:1363px;top:893px"><i></i></div>
<div class="tg" style="left:1416px;top:893px"><i></i></div>
<div class="no" style="left:1477px;top:891px">否</div>
<div class="t td num" style="left:1547px;top:885.5px;letter-spacing:.55px">2024-01-18</div>
<div class="t td num" style="left:1547px;top:906.5px;letter-spacing:.55px">17:05:07</div>
<svg style="left:1668px;top:880px" width="14" height="13" viewBox="0 0 14 13"><path d="M3 9.5 L3.5 7 L9.5 1 L11.5 3 L5.5 9 Z" fill="none" stroke="#5e6cb0" stroke-width="1.3" stroke-linejoin="round"/><path d="M1 12.2 H13.5" stroke="#5e6cb0" stroke-width="1.3"/></svg>
<div class="abtn" style="left:1695px;top:873px;width:54px">充值</div>
<div class="abtn" style="left:1753px;top:873px;width:53px">归属</div>
<div class="abtn" style="left:1668px;top:905px;width:79px;height:31px">修改密码</div>
<div class="abtn" style="left:1751px;top:905px;width:79px;height:31px">恢复密码</div>
<div id="sb" class="a"></div><div id="sbt" class="a"></div>
</div></body></html>
